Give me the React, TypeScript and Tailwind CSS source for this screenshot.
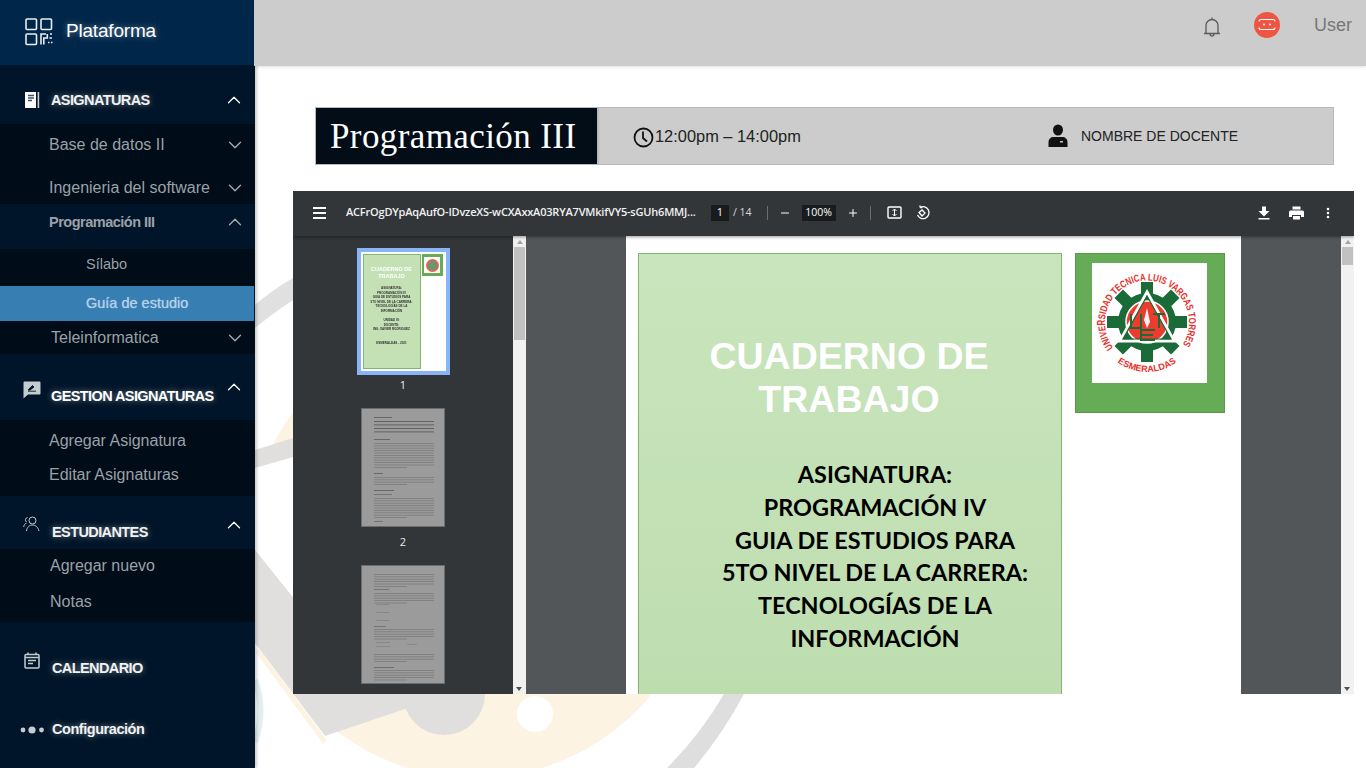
import { ChevronDown, ChevronUp, Minus, Plus } from "lucide-react";

const sans = "font-['Liberation_Sans',Arial,sans-serif]";
const glow = "[text-shadow:0_0_6px_rgba(255,255,255,0.45)]";

function Chevron({ up, dim }: { up?: boolean; dim?: boolean }) {
  const cls = `w-[22px] h-[22px] ${dim ? "text-[#a5adb5]" : "text-white"}`;
  return up ? <ChevronUp className={cls} strokeWidth={1.4} /> : <ChevronDown className={cls} strokeWidth={1.4} />;
}

function Section({ h, pt, iconW, icon, label, up = true, chevPt }: any) {
  return (
    <div className={`flex items-start bg-[#001529] ${h} ${pt}`}>
      <div className={`${iconW} shrink-0`}>{icon}</div>
      <span className={`text-[14.5px] leading-[20px] font-semibold whitespace-nowrap tracking-[-0.6px] text-[#f2f2f2] ${glow}`}>{label}</span>
      {up && <div className={`ml-auto mr-[10px] ${chevPt}`}><Chevron up /></div>}
    </div>
  );
}

function Item({ h, pl, label, bg = "bg-[#000c17]", chev, up, pt }: any) {
  return (
    <div className={`flex items-start ${bg} ${h} ${pl} ${pt} pr-[9px]`}>
      <span className="text-[16px] leading-[20px] text-[#9aa1a8]">{label}</span>
      {chev && <div className="ml-auto -mt-px"><Chevron up={up} dim /></div>}
    </div>
  );
}

function Sidebar() {
  return (
    <aside className={`relative z-10 w-[255px] shrink-0 h-full bg-[#001529] shadow-[2px_0_3px_rgba(0,0,0,0.2)] ${sans}`}>
      <div className="flex items-center h-[65px] bg-[#00264a] pl-[25px] pb-[2px]">
        <svg width="28" height="28" viewBox="0 0 28 28" fill="none" stroke="#e8edf2" strokeWidth="1.6">
          <rect x="1" y="1" width="10.5" height="10.5" rx="1" />
          <rect x="16" y="1" width="10.5" height="10.5" rx="1" />
          <rect x="1" y="16" width="10.5" height="10.5" rx="1" />
          <path d="M16 26.5V16h5M18.8 26.5v-6.5h3.5v-4M25 16h2M24.5 20h2.5M23 24.5h1.5M26 24.5h1.5" />
        </svg>
        <span className={`ml-[13px] text-[19px] font-normal tracking-[-0.2px] text-white ${glow}`}>Plataforma</span>
      </div>

      <Section
        h="h-[59px]"
        pt="pt-[25px] pl-[25px]"
        iconW="w-[26px]"
        chevPt="-mt-[1px]"
        label="ASIGNATURAS"
        icon={
          <svg width="15" height="16" viewBox="0 0 15 16" className="mt-[2px]">
            <rect x="0" y="0" width="11" height="16" fill="#fff" />
            <rect x="12.6" y="0" width="1.6" height="16" fill="#c8ced4" />
            <path d="M3 3.5h6M3 6h6M3 8.5h4" stroke="#3d5166" strokeWidth="1.3" />
          </svg>
        }
      />
      <Item h="h-[43px]" pl="pl-[49px]" pt="pt-[11px]" label="Base de datos II" chev />
      <Item h="h-[37px]" pl="pl-[49px]" pt="pt-[11px]" label="Ingenieria del software" chev />
      <Item h="h-[45px]" pl="pl-[49px]" pt="pt-[8px]" bg="bg-[#001529]" label={<span className="font-semibold text-[14.5px] tracking-[-0.5px]">Programación III</span>} chev up />
      <div className="flex items-start h-[37px] bg-[#000c17] pl-[86px] pt-[5px]">
        <span className="text-[14.5px] leading-[20px] text-[#9aa1a8]">Sílabo</span>
      </div>
      <div className="flex items-center h-[35px] w-[254px] bg-[#377eb3] pl-[86px]">
        <span className="text-[14.5px] text-[#b4d2ea] [text-shadow:0_0_1px_rgba(180,210,234,0.8)]">Guía de estudio</span>
      </div>
      <Item h="h-[33px]" pl="pl-[51px]" pt="pt-[7px]" label="Teleinformatica" chev />

      <Section
        h="h-[66px]"
        pt="pt-[32px] pl-[23px]"
        iconW="w-[28px]"
        chevPt="-mt-[10px]"
        label={<span className="text-[#fff]">GESTION ASIGNATURAS</span>}
        icon={
          <svg width="18" height="18" viewBox="0 0 18 18" className="-mt-[5px]">
            <path d="M1.5 0.5h15a1 1 0 0 1 1 1v11a1 1 0 0 1-1 1H5l-4.5 4V1.5a1 1 0 0 1 1-1z" fill="#c4cbd1" />
            <path d="M5 10.2h8M5.5 8.5l4-4 1.5 1.5-4 3H5z" fill="#001529" stroke="#001529" strokeWidth="0.9" />
          </svg>
        }
      />
      <Item h="h-[40px]" pl="pl-[49px]" pt="pt-[11px]" label="Agregar Asignatura" />
      <Item h="h-[36px]" pl="pl-[49px]" pt="pt-[5px]" label="Editar Asignaturas" />

      <Section
        h="h-[53px]"
        pt="pt-[26px] pl-[23px]"
        iconW="w-[29px]"
        chevPt="-mt-[8px] mr-[9px]"
        label="ESTUDIANTES"
        icon={
          <svg width="17" height="17" viewBox="0 0 17 17" fill="none" stroke="#c4cbd1" strokeWidth="1" className="-mt-[6px]">
            <circle cx="9.5" cy="4.5" r="3.5" />
            <path d="M3.5 15c.5-4 3-6 6-6s5.5 2 6.500 6M4.500 1.500a2.500 2.500 0 0 0-1 4.500M0.700 11c.3-2 1.200-3.500 2.800-4" />
          </svg>
        }
      />
      <Item h="h-[36px]" pl="pl-[50px]" pt="pt-[7px]" label="Agregar nuevo" />
      <Item h="h-[37px]" pl="pl-[50px]" pt="pt-[7px]" label="Notas" />

      <Section
        h="h-[66px]"
        pt="pt-[36px] pl-[24px]"
        iconW="w-[28px]"
        up={false}
        label="CALENDARIO"
        icon={
          <svg width="16" height="17" viewBox="0 0 16 17" fill="none" stroke="#c4cbd1" strokeWidth="1.5" className="-mt-[6px]">
            <rect x="1" y="2.500" width="14" height="13.500" rx="1" />
            <path d="M1 5.500h14M4 0.500v2.500M12 0.500v2.500M4 8.500h8M4 11.500h5" />
          </svg>
        }
      />
      <div className="flex items-center bg-[#001529] pl-[20px] pt-[31px]">
        <svg width="25" height="10" viewBox="0 0 25 10" className="mr-[7px]">
          <circle cx="3" cy="5" r="2.400" fill="#c4cbd1" />
          <circle cx="12" cy="5" r="3.600" fill="#c4cbd1" />
          <circle cx="21.500" cy="5" r="2.400" fill="#c4cbd1" />
        </svg>
        <span className={`text-[14.5px] font-semibold tracking-[-0.45px] text-[#f2f2f2] ${glow}`}>Configuración</span>
      </div>
    </aside>
  );
}

function Topbar() {
  return (
    <header className={`relative z-20 -ml-px flex items-start justify-end h-[66px] bg-[#cccccc] shadow-[0_1px_3px_rgba(0,0,0,0.12)] ${sans}`}>
      <svg width="18" height="22" viewBox="0 0 18 22" fill="none" stroke="#5a5a5a" strokeWidth="1.3" className="mr-[33px] mt-[16px]">
        <path d="M1 17.500h16M3 17.500v-8a6 6 0 0 1 12 0v8M9 3.500V1.500M7 17.500c0 3.500 4 3.500 4 0" />
      </svg>
      <div className="flex items-center justify-center w-[26px] h-[26px] rounded-full bg-[#ef5543] mr-[34px] mt-[12px]">
        <svg width="18" height="14" viewBox="0 0 18 14" fill="none" stroke="#fff" strokeWidth="1.100">
          <path d="M3 1.500h12a2 2 0 0 1 2 2M3 1.500a2 2 0 0 0-2 2M1 9.500a2 2 0 0 0 2 2h12a2 2 0 0 0 2-2" />
          <circle cx="6" cy="6.500" r="0.900" fill="#fff" stroke="none" />
          <circle cx="12" cy="6.500" r="0.900" fill="#fff" stroke="none" />
        </svg>
      </div>
      <span className="text-[18px] leading-[22px] text-[#777777] mr-[14px] mt-[14px]">User</span>
    </header>
  );
}

function Watermark() {
  // the logo behind the page, seen only around the viewer (page coordinates minus 255,66)
  return (
    <svg width="1111" height="702" viewBox="255 66 1111 702" className="absolute left-0 top-0">
      <circle cx="475" cy="550" r="228" fill="#fdf3e3" />
      <path d="M250 468 L293 457 L293 598 L255 550 L250 550Z" fill="#fff" />
      <path d="M257 650 L325 742" fill="none" stroke="#fdf3e3" strokeWidth="5" />
      <path d="M255 305 Q272 290 293 278 L293 300 Q272 314 255 328Z" fill="#e0e0e0" />
      <path d="M255 450 L293 438 L293 457 L255 468Z" fill="#e0dfdd" />
      <path d="M255 550 L300 606 L485 694 L405 709 L325 736 L255 643Z" fill="#e0dfdd" />
      <circle cx="444" cy="694" r="41" fill="#e0dfdd" />
      <ellipse cx="535" cy="714" rx="18" ry="18" fill="#fff" />
      <path d="M724 694 H744 Q722 735 694 768 H667 Q700 735 724 694Z" fill="#dedede" />
      <path d="M255 680 Q266 710 255 742" fill="none" stroke="#e3efee" strokeWidth="6" />
    </svg>
  );
}

function TitleBar() {
  return (
    <div className={`relative flex items-stretch ml-[60px] w-[1019px] h-[58px] bg-[#cccccc] border border-[#b9b9b9] ${sans}`}>
      <div className="flex items-center pl-[14px] pt-[3px] w-[283px] bg-[#020d18] border-r-2 border-r-[#b9b9b9]">
        <span className="font-['Liberation_Serif',serif] text-[35px] tracking-[0.4px] whitespace-nowrap text-white">Programación III</span>
      </div>
      <div className="flex items-center pl-[34px] w-[449px]">
        <svg width="21" height="21" viewBox="0 0 21 21" fill="none" stroke="#111" strokeWidth="1.800" className="mt-[3px]">
          <circle cx="10.500" cy="10.500" r="9" />
          <path d="M10 4.500v6.500l4 3.500" />
        </svg>
        <span className="ml-px text-[16.4px] text-[#222]">12:00pm – 14:00pm</span>
      </div>
      <div className="flex items-center">
        <svg width="20" height="24" viewBox="0 0 20 24" className="mr-[13px]">
          <ellipse cx="10" cy="6" rx="5" ry="5.500" fill="#111" />
          <path d="M0.500 23v-5c0-3 2.500-5 5-5h9c2.500 0 5 2 5 5v5z" fill="#111" />
          <rect x="12" y="17" width="3" height="1.500" fill="#ccc" />
        </svg>
        <span className="text-[14px] text-[#222]">NOMBRE DE DOCENTE</span>
      </div>
    </div>
  );
}

function ToolbarIcons() {
  return (
    <>
      <div className="flex items-center justify-center w-[18px] h-[16px] bg-[#191b1c] ml-[18px] text-[11px] text-white">1</div>
      <span className="ml-[4px] text-[10.5px] text-[#d8d8d8]">/ 14</span>
      <div className="w-px h-[14px] bg-[#6a6d70] ml-[15px]" />
      <Minus className="w-[12px] h-[12px] ml-[11px] text-white" strokeWidth={2} />
      <div className="flex items-center justify-center w-[34px] h-[16px] bg-[#191b1c] ml-[11px] text-[10.5px] text-white">100%</div>
      <Plus className="w-[12px] h-[12px] ml-[11px] text-white" strokeWidth={2} />
      <div className="w-px h-[14px] bg-[#6a6d70] ml-[11px]" />
      <svg width="15" height="13" viewBox="0 0 15 13" className="ml-[16px]" fill="none" stroke="#fff" strokeWidth="1.400">
        <rect x="1" y="1" width="13" height="11" rx="1" />
        <path d="M7.500 3v7M5.500 5l2-2 2 2M5.500 8l2 2 2-2" strokeWidth="1" />
      </svg>
      <svg width="16" height="16" viewBox="0 0 16 16" className="ml-[13px]" fill="none" stroke="#fff" strokeWidth="1.300">
        <path d="M5 2.500a6 6 0 1 1-2.500 7.500M5 2.500V0.500M5 2.500H7.500" />
        <path d="M2.500 6.500l3-2.500 3 3-3 3z" fill="none" transform="translate(1.500 1)" />
      </svg>
      <div className="ml-auto flex items-center mr-[24px]">
        <svg width="12" height="14" viewBox="0 0 12 14" fill="#fff">
          <path d="M4 0.500h4v4.500h3.500L6 10.500 0.500 5H4zM0.500 12h11v1.500h-11z" />
        </svg>
        <svg width="15" height="14" viewBox="0 0 15 14" fill="#fff" className="ml-[19px]">
          <path d="M3.500 0.500h8v3h-8zM1.500 4.500h12a1.500 1.500 0 0 1 1.500 1.500v5h-3V9H3v2H0V6a1.500 1.500 0 0 1 1.500-1.500zM4 10h7v3.500H4z" />
        </svg>
        <svg width="4" height="12" viewBox="0 0 4 12" fill="#fff" className="ml-[22px]">
          <circle cx="2" cy="2" r="1.300" />
          <circle cx="2" cy="6" r="1.300" />
          <circle cx="2" cy="10" r="1.300" />
        </svg>
      </div>
    </>
  );
}

function FakeText({ rows }: { rows: [number, number, number, number?][] }) {
  // thumbnails are too small to read: text shows as grey lines
  return (
    <svg width="84" height="119" viewBox="0 0 84 119" className="blur-[0.5px]">
      {rows.map(([x, y, w, o], i) => (
        <rect key={i} x={x} y={y} width={w} height="0.8" fill="#555" opacity={o ?? 0.45} />
      ))}
    </svg>
  );
}

const para = (y: number, n: number, gap = 2.400, x = 12, w = 60): [number, number, number][] =>
  Array.from({ length: n }, (_, i) => [x, y + i * gap, i === n - 1 ? w * 0.55 : w] as [number, number, number]);

const page2: [number, number, number, number?][] = [
  [12, 8, 18, 0.9],
  [12, 12, 60, 1], [12, 15.500, 60, 1], [12, 19, 60, 1], [12, 22.500, 60, 1],
  [12, 30, 16, 0.9],
  ...para(34, 11),
  [12, 64, 9, 0.9],
  ...para(68, 4),
  [12, 81, 20, 0.9],
  [12, 85, 18, 0.7],
  ...para(89, 9),
  [12, 112, 9, 0.7],
];

const page3: [number, number, number, number?][] = [
  ...para(8, 6),
  [12, 23, 15, 0.7],
  ...para(27, 5),
  [14, 38, 14, 0.35], [14, 46, 14, 0.35], [14, 54, 14, 0.35],
  [12, 60, 12, 0.7],
  ...para(63, 5),
  [14, 76, 14, 0.35], [14, 80, 14, 0.35], [45, 78, 10, 0.35],
  ...para(88, 4),
  [12, 101, 20, 0.8],
  ...para(104, 5),
];

function Thumbnails() {
  return (
    <div className="flex flex-col items-center w-[220px] bg-[#323639] overflow-hidden">
      <div className="mt-[12px] w-[93px] h-[127px] border-[4px] border-[#8ab4f8] bg-white p-[2px] shrink-0">
        <div className="flex h-full blur-[0.35px]">
          <div className="flex flex-col items-center w-[58px] h-full bg-[#c4e1b6] border border-[#82b56e] text-center font-['Liberation_Sans',sans-serif] font-bold">
            <span className="mt-[11px] text-[5.5px] leading-[7px] text-white">CUADERNO DE<br />TRABAJO</span>
            <span className="mt-[6px] text-[3px] leading-[4.500px] text-[#333]">ASIGNATURA:<br />PROGRAMACIÓN IV<br />GUIA DE ESTUDIOS PARA<br />5TO NIVEL DE LA CARRERA:<br />TECNOLOGÍAS DE LA<br />INFORMACIÓN</span>
            <span className="mt-[5px] text-[3px] leading-[4.500px] text-[#333]">UNIDAD III:<br />DOCENTE:<br />ING. XAVIER RODRIGUEZ</span>
            <span className="mt-[9px] text-[3px] leading-[4.500px] text-[#333]">ESMERALDAS - 2021</span>
          </div>
          <div className="flex items-center justify-center ml-[1px] w-[21px] h-[22px] bg-[#66ab55] shrink-0">
            <div className="flex items-center justify-center w-[16px] h-[16px] bg-white">
              <div className="w-[13px] h-[13px] rounded-full border-[2px] border-[#e8604f] bg-[#5f9c73]" />
            </div>
          </div>
        </div>
      </div>
      <span className="mt-[3px] h-[20px] text-[11px] leading-[14px] text-[#e8eaed]">1</span>
      <div className="mt-[10px] w-[84px] h-[119px] bg-[#9b9b9b] border border-[#6a6d70] shrink-0 overflow-hidden"><FakeText rows={page2} /></div>
      <span className="mt-[8px] h-[16px] text-[11px] leading-[14px] text-[#e8eaed]">2</span>
      <div className="mt-[14px] w-[84px] h-[119px] bg-[#9b9b9b] border border-[#6a6d70] shrink-0 overflow-hidden"><FakeText rows={page3} /></div>
    </div>
  );
}

function Scrollbar({ thumbH, thumbTop }: { thumbH: string; thumbTop: string }) {
  return (
    <div className="relative w-[13px] shrink-0 bg-[#f1f1f1]">
      <div className="mx-auto mt-[4px] w-0 h-0 border-x-[3.500px] border-x-transparent border-b-[4px] border-b-[#a3a3a3]" />
      <div className={`mx-auto ${thumbTop} w-[11px] ${thumbH} bg-[#c1c1c1]`} />
      <div className="absolute bottom-[3px] left-[3px] w-0 h-0 border-x-[3.500px] border-x-transparent border-t-[4px] border-t-[#505050]" />
    </div>
  );
}

function UtelvtLogo() {
  const teeth = [0, 45, 90, 135, 180, 225, 270, 315];
  return (
    <svg width="115" height="120" viewBox="0 0 115 120">
      <defs>
        <path id="top-arc" d="M21.400 84.800 A42 42 0 1 1 88.600 84.800" />
        <path id="bottom-arc" d="M25.600 99.400 A50 50 0 0 0 84.400 99.400" />
      </defs>
      <text fill="#e8302a" fontFamily="Liberation Sans, sans-serif" fontWeight="700" fontSize="10" textLength="182" lengthAdjust="spacingAndGlyphs">
        <textPath href="#top-arc" textLength="182" lengthAdjust="spacingAndGlyphs">UNIVERSIDAD TECNICA LUIS VARGAS TORRES</textPath>
      </text>
      <text fill="#e8302a" fontFamily="Liberation Sans, sans-serif" fontWeight="700" fontSize="9">
        <textPath href="#bottom-arc" startOffset="50%" textAnchor="middle">ESMERALDAS</textPath>
      </text>
      <g transform="translate(55 59)">
        {teeth.map((t) => (
          <rect key={t} x="-6" y="-40" width="12" height="14" fill="#1b6b39" transform={`rotate(${t})`} />
        ))}
        <circle r="29" fill="#1b6b39" />
        <circle r="21" fill="#ee3b2e" stroke="#fff" strokeWidth="1.500" />
        <path d="M0 -30 L27 19 H-27Z" fill="none" stroke="#fff" strokeWidth="3" />
        <path d="M0 -26 L24 17 H-24Z" fill="none" stroke="#1b6b39" strokeWidth="1.200" />
        <path d="M-16 -8 V6 H-6 V-8" fill="none" stroke="#1b6b39" strokeWidth="2" />
        <path d="M6 -8 H18 M12 -8 V6" fill="none" stroke="#1b6b39" strokeWidth="2" />
        <path d="M8 8 H-6 V18 H8 M-6 13 H6" fill="none" stroke="#1b6b39" strokeWidth="2" />
        <path d="M0 -14 L3 0 L0 6 L-3 -2Z" fill="#f2f2f2" />
      </g>
    </svg>
  );
}

function PdfPage() {
  return (
    <div className="flex items-start mx-auto w-[615px] h-full bg-white pl-[12px] pt-[17px]">
      <div className="flex flex-col items-center w-[424px] h-[500px] bg-gradient-to-b from-[#c9e5bd] to-[#bcdcad] border border-[#82b56e]">
        <div className={`mt-[81px] -ml-[2px] text-center text-[37.5px] leading-[43px] font-bold text-white ${sans}`}>
          CUADERNO DE<br />TRABAJO
        </div>
        <div className="mt-[37px] ml-[50px] text-center font-['Lato',sans-serif] text-[23.4px] leading-[32.800px] font-bold text-black">
          ASIGNATURA:<br />PROGRAMACIÓN IV<br />GUIA DE ESTUDIOS PARA<br />5TO NIVEL DE LA CARRERA:<br />TECNOLOGÍAS DE LA<br />INFORMACIÓN
        </div>
      </div>
      <div className="ml-[13px] w-[150px] h-[160px] bg-[#66ab55] border border-[#5a964b] pt-[9px] pl-[16px]">
        <div className="w-[115px] h-[120px] bg-white"><UtelvtLogo /></div>
      </div>
    </div>
  );
}

function PdfViewer() {
  return (
    <div className="relative flex flex-col ml-[38px] mt-[26px] w-[1061px] h-[503px] overflow-hidden font-['Open_Sans','Noto_Sans',sans-serif]">
      <div className="relative z-10 flex items-center h-[45px] shrink-0 bg-[#323639] pl-[20px] pb-[2px] shadow-[0_1px_3px_rgba(0,0,0,0.4)]">
        <div className="flex flex-col gap-[3px] w-[13px]">
          <div className="h-[2px] bg-white" />
          <div className="h-[2px] bg-white" />
          <div className="h-[2px] bg-white" />
        </div>
        <span className="ml-[20px] w-[347px] whitespace-nowrap text-[11px] font-semibold tracking-[-0.2px] text-[#f1f1f1]">
          ACFrOgDYpAqAufO-IDvzeXS-wCXAxxA03RYA7VMkifVY5-sGUh6MMJ...
        </span>
        <ToolbarIcons />
      </div>
      <div className="flex flex-1 min-h-0">
        <Thumbnails />
        <Scrollbar thumbH="h-[93px]" thumbTop="mt-[3px]" />
        <div className="flex-1 min-w-0 bg-[#525659] overflow-hidden"><PdfPage /></div>
        <Scrollbar thumbH="h-[18px]" thumbTop="mt-[3px]" />
      </div>
    </div>
  );
}

export default function App() {
  return (
    <div className="flex w-[1366px] h-[768px] overflow-hidden bg-white">
      <Sidebar />
      <div className="flex-1 flex flex-col min-w-0">
        <Topbar />
        <main className="relative flex-1 overflow-hidden pt-[41px]">
          <Watermark />
          <TitleBar />
          <PdfViewer />
        </main>
      </div>
    </div>
  );
}
